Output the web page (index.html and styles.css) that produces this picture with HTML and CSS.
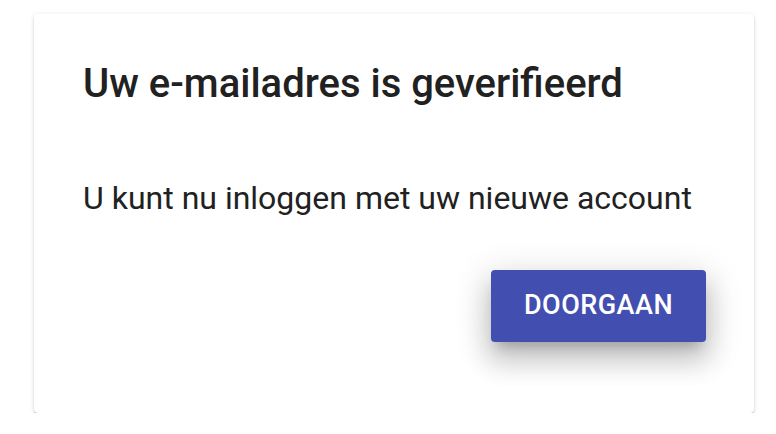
FILE: index.html
```html
<!DOCTYPE html>
<html lang="nl">
<head>
<meta charset="utf-8">
<link rel="stylesheet" href="styles.css">
</head>
<body>
<div class="card">
  <h2 class="title">Uw e-mailadres is geverifieerd</h2>
  <p class="text">U kunt nu inloggen met uw nieuwe account</p>
  <div class="actions">
    <button class="btn">DOORGAAN</button>
  </div>
</div>
</body>
</html>
```
FILE: styles.css
```css
html, body {
  margin: 0;
  padding: 0;
  background: #ffffff;
}
body {
  font-family: Roboto, "Liberation Sans", Arial, sans-serif;
  color: #212121;
}
.card {
  box-sizing: border-box;
  margin: 14px 0 0 34px;
  width: 720px;
  height: 399px;
  background: #fff;
  border-radius: 4px;
  padding: 46px 48px 0 49px;
  box-shadow: 0 3px 2px -2px rgba(0,0,0,0.3), 0 2px 2px 0 rgba(0,0,0,0.14), 0 1px 5px 0 rgba(0,0,0,0.12);
}
.title {
  margin: 0;
  font-size: 40px;
  line-height: 48px;
  font-weight: 500;
}
.text {
  margin: 71px 0 0 0;
  font-size: 32px;
  line-height: 38px;
  font-weight: 400;
}
.actions {
  display: flex;
  justify-content: flex-end;
  margin-top: 53px;
}
.btn {
  width: 215px;
  height: 72px;
  border: none;
  border-radius: 4px;
  background: #434fb0;
  color: #fff;
  font-family: Roboto, "Liberation Sans", Arial, sans-serif;
  font-size: 27px;
  font-weight: 500;
  letter-spacing: 0.5px;
  padding: 0 0 2px 0;
  box-shadow: 0 10px 12px -6px rgba(0,0,0,0.2), 0 18px 26px 3px rgba(0,0,0,0.14), 0 8px 34px 6px rgba(0,0,0,0.12);
}
```
